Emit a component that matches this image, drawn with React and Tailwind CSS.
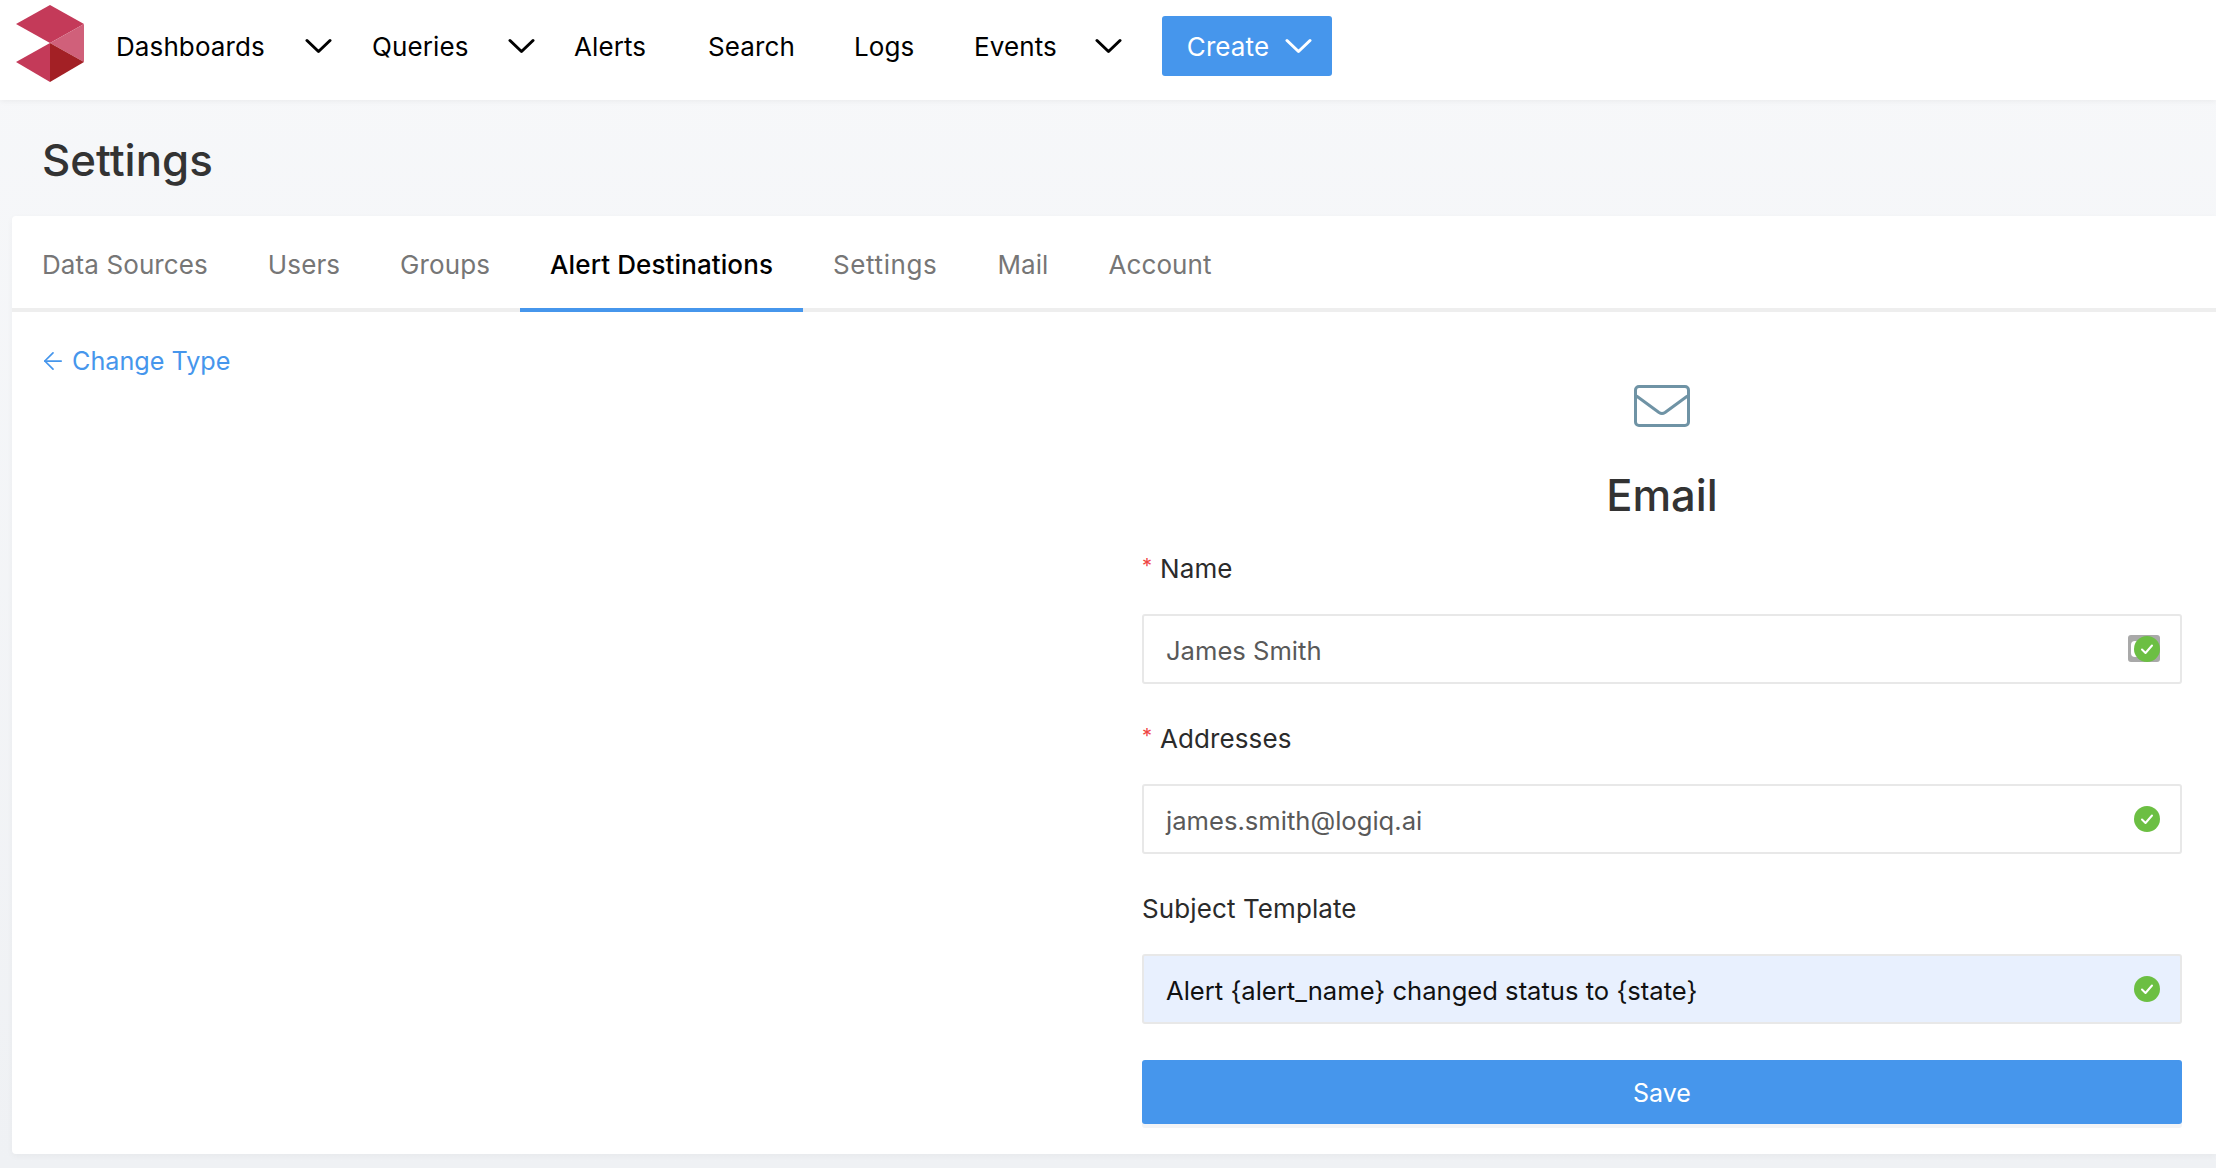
import React from 'react';
import { ArrowLeft } from 'lucide-react';

const font = { fontFamily: 'Inter, "Noto Sans", sans-serif' };

const Chevron = ({ className = 'text-black' }) => (
  <svg width="27" height="16" viewBox="0 0 27 16" fill="none" className={className}>
    <path d="M2 2.5 L13.5 13.5 L25 2.5" stroke="currentColor" strokeWidth="3" strokeLinecap="round" strokeLinejoin="round" />
  </svg>
);

const Logo = () => (
  <svg width="68" height="77" viewBox="16 5 68 77" className="shrink-0 mb-[5px]">
    <polygon points="50,5 84,24 50,43 16,24" fill="#c43a59" />
    <polygon points="84,24 84,62 50,43" fill="#d0607a" />
    <polygon points="50,43 50,82 16,62" fill="#c43a59" />
    <polygon points="50,43 84,62 50,82" fill="#a32025" />
  </svg>
);

const MailIcon = () => (
  <svg width="56" height="42" viewBox="0 0 56 42" fill="none" className="text-[#6f93a5]">
    <rect x="1.5" y="1.5" width="53" height="39" rx="3.5" stroke="currentColor" strokeWidth="3" />
    <path d="M2.5 11 L25 27.5 Q28 29.5 31 27.5 L53.5 11" stroke="currentColor" strokeWidth="3" strokeLinejoin="round" />
  </svg>
);

const Check = () => (
  <svg width="26" height="26" viewBox="0 0 26 26" className="relative">
    <circle cx="13" cy="13" r="13" fill="#6cbf43" />
    <path d="M8 13.5 L11.5 17 L18 9.5" fill="none" stroke="#fff" strokeWidth="2" strokeLinecap="round" strokeLinejoin="round" />
  </svg>
);

const NavItem = ({ label, caret, width }) => (
  <div className={`flex items-center justify-between ${width}`}>
    <span>{label}</span>
    {caret && <Chevron />}
  </div>
);

const Field = ({ label, required, value, filled, credentials }) => (
  <div className="flex flex-col">
    <div className="flex items-center h-[30px] text-[26px] tracking-[0.1px] text-[#2b2b2b]">
      {required && <span className="w-[18px] text-[20px] text-[#ef4444] -mt-1">*</span>}
      {label}
    </div>
    <div className={`mt-[31px] h-[70px] flex items-center justify-between pl-[22px] pr-[20px] rounded-[3px] border-2 border-[#e8e8e8] text-[25.6px] ${filled ? 'bg-[#e8f0fe] text-[#111]' : 'bg-white text-[#595959]'}`}>
      <span className="pt-[4px]">{value}</span>
      <div className="relative flex items-center">
        {credentials && (
          <div className="absolute right-0 -top-[1px] w-[32px] h-[27px] rounded-[3px] bg-[#a9a9a9] overflow-hidden">
            <div className="absolute left-[3px] top-[6px] w-[8px] h-[16px] rounded-[4px] bg-white" />
          </div>
        )}
        <Check />
      </div>
    </div>
  </div>
);

export default function App() {
  const tabs = ['Data Sources', 'Users', 'Groups', 'Alert Destinations', 'Settings', 'Mail', 'Account'];

  return (
    <div style={font} className="w-[2216px] h-[1168px] overflow-hidden bg-linear-to-b from-[#f7f8fa] to-[#eff1f4] flex flex-col">
      {/* Top nav */}
      <header className="h-[100px] shrink-0 bg-white flex items-center pl-[16px] pb-[8px] text-[26px] tracking-[0.1px] text-black shadow-[0_1px_6px_rgba(0,0,0,0.06)] relative">
        <Logo />
        <nav className="ml-[32px] flex items-center">
          <NavItem label="Dashboards" caret width="w-[216px] mr-[40px]" />
          <NavItem label="Queries" caret width="w-[163px] mr-[39px]" />
          <NavItem label="Alerts" width="w-[134px]" />
          <NavItem label="Search" width="w-[146px]" />
          <NavItem label="Logs" width="w-[120px]" />
          <NavItem label="Events" caret width="w-[148px] mr-[40px]" />
          <button className="w-[170px] h-[60px] flex items-center justify-center gap-[16px] pl-[5px] rounded-[3px] bg-[#4696ec] text-white">
            Create
            <Chevron className="text-white" />
          </button>
        </nav>
      </header>

      <h1 className="h-[116px] shrink-0 flex items-center pl-[42px] pt-[5px] text-[43.8px] font-medium text-[#333]">Settings</h1>

      {/* Card */}
      <main className="ml-[12px] h-[938px] bg-white rounded-l-[4px] shadow-[0_2px_6px_rgba(0,0,0,0.04)]">
        <div className="h-[96px] flex border-b-4 border-[#eeeeee] text-[26px] tracking-[0.1px] text-[#767676]">
          {tabs.map((tab) => (
            <div
              key={tab}
              className={`h-[96px] flex items-center px-[30px] border-y-4 border-t-transparent ${tab === 'Alert Destinations' ? 'border-b-[#4696ec] text-black font-medium' : 'border-b-transparent'} ${tab === 'Settings' ? 'tracking-[0.6px]' : ''}`}
            >
              {tab}
            </div>
          ))}
        </div>

        <div className="flex">
          <div className="w-[1130px] pl-[27px] pt-[31px]">
            <a className="flex items-center gap-[5px] text-[25.2px] text-[#4696ec]">
              <ArrowLeft size={28} strokeWidth={1.5} className="-mt-[1px]" />
              Change Type
            </a>
          </div>

          <form className="w-[1040px] pt-[73px]">
            <div className="flex flex-col items-center">
              <MailIcon />
              <h2 className="mt-[40px] text-[43.5px] leading-[56px] font-medium text-[#333]">Email</h2>
            </div>
            <div className="mt-[30px] flex flex-col gap-[39px]">
              <Field label="Name" required value="James Smith" credentials />
              <Field label="Addresses" required value="james.smith@logiq.ai" />
              <Field label="Subject Template" value="Alert {alert_name} changed status to {state}" filled />
            </div>
            <button className="mt-[36px] w-full h-[64px] pt-[3px] rounded-[3px] bg-[#4696ec] text-white text-[25px] shadow-[0_4px_0_#f3f4f6]">Save</button>
          </form>
        </div>
      </main>
    </div>
  );
}
